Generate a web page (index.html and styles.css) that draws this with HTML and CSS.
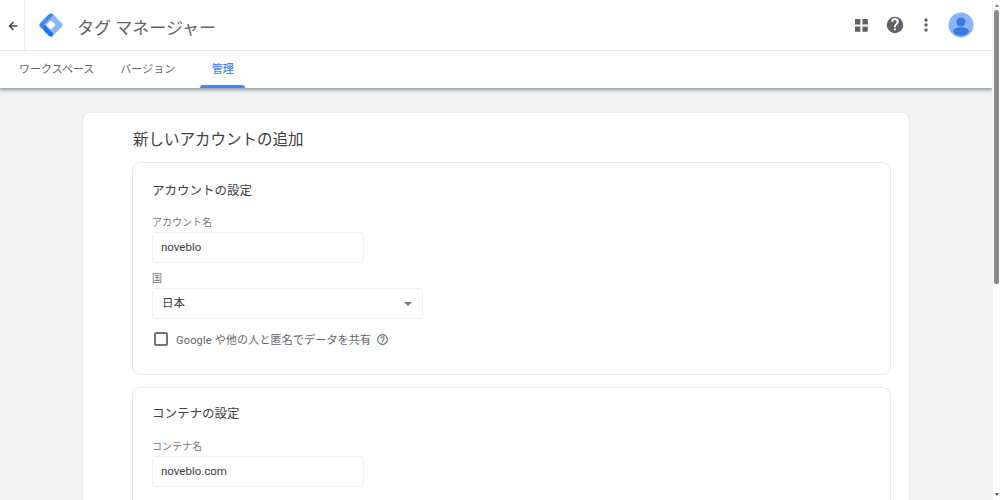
FILE: index.html
```html
<!DOCTYPE html>
<html lang="ja">
<head>
<meta charset="utf-8">
<title>タグ マネージャー</title>
<link rel="stylesheet" href="styles.css">
</head>
<body>
<div class="page">
  <header class="top">
    <div class="appbar">
      <button class="back" aria-label="戻る">
        <svg width="12" height="12" viewBox="0 0 24 24"><path d="M21 10.500H8.500l5.300-5.300L11.800 3 3 12l8.800 9 2-2.200-5.300-5.300H21z" fill="#3c4043"/></svg>
      </button>
      <svg class="logo" width="26" height="26" viewBox="0 0 26 26">
        <path d="M13 1.500c.8 0 1.500.3 2 .8l8.700 8.700c1.100 1.100 1.100 2.900 0 4L15 23.700c-1.100 1.100-2.900 1.100-4 0l-8.700-8.700c-1.100-1.100-1.100-2.900 0-4L11 2.300c.5-.5 1.200-.8 2-.8z" fill="#8ab4f8"/>
        <path d="M2.300 11 11 2.300c1.100-1.100 2.900-1.100 4 0l.5.5L6 12.500l9 9 0 2.200c-1.100 1.100-2.900 1.100-4 0l-8.700-8.700c-1.100-1.100-1.100-2.900 0-4z" fill="#4285f4"/>
        <path d="M6.500 13l3.500 3.500 5 5 0 2.200c-1.100 1-2.900 1-4 0l-5-5z" fill="#1a73e8"/>
        <path d="M13 8.300 17.700 13 13 17.700 8.300 13z" fill="#fff"/>
      </svg>
      <span class="product">タグ マネージャー</span>
      <div class="actions">
        <svg class="apps" width="13" height="13" viewBox="0 0 14 14"><path d="M0 0h5.800v5.800H0zM8 0h5.800v5.800H8zM0 8h5.800v5.800H0zM8 8h5.800v5.800H8z" fill="#5f6368"/></svg>
        <svg class="help" width="18" height="18" viewBox="0 0 24 24"><path d="M12 1a11 11 0 1 0 0 22 11 11 0 0 0 0-22zm1.200 18h-2.500v-2.500h2.500zm2.500-8.300-1.100 1.100c-.9.900-1.400 1.600-1.400 3.200h-2.500v-.6c0-1.300.5-2.400 1.400-3.300l1.500-1.600c.5-.4.700-1 .7-1.700a2.400 2.400 0 0 0-4.800 0H7a5 5 0 0 1 10 0c0 1.100-.5 2.100-1.300 2.900z" fill="#5f6368"/></svg>
        <svg class="more" width="4" height="14" viewBox="0 0 4 14"><circle cx="2" cy="2" r="1.700" fill="#5f6368"/><circle cx="2" cy="7" r="1.700" fill="#5f6368"/><circle cx="2" cy="12" r="1.700" fill="#5f6368"/></svg>
        <svg class="avatar" width="26" height="26" viewBox="0 0 26 26"><circle cx="13" cy="13" r="12.500" fill="#8ab4f8"/><circle cx="13" cy="10" r="4.500" fill="#3a78e0"/><path d="M4.800 19.500c1-3 4.700-4.300 8.200-4.300s7.200 1.300 8.200 4.300c-2 2.900-4.900 4.300-8.200 4.300s-6.200-1.400-8.200-4.300z" fill="#3a78e0"/></svg>
      </div>
    </div>
    <nav class="tabs">
      <a class="tab tab-work">ワークスペース</a>
      <a class="tab tab-ver">バージョン</a>
      <a class="tab tab-admin">管理</a>
    </nav>
  </header>

  <main class="content">
    <section class="card">
      <h1 class="title">新しいアカウントの追加</h1>
      <div class="panel panel-account">
        <h2 class="panel-title">アカウントの設定</h2>
        <label class="field-label">アカウント名</label>
        <div class="input input-short">noveblo</div>
        <label class="field-label label-country">国</label>
        <div class="input input-select">日本<span class="caret"></span></div>
        <div class="share">
          <span class="checkbox"></span>
          <span class="share-text">Google や他の人と匿名でデータを共有</span>
          <svg class="share-help" width="13" height="13" viewBox="0 0 24 24"><path d="M12 2a10 10 0 1 0 0 20 10 10 0 0 0 0-20zm0 18a8 8 0 1 1 0-16 8 8 0 0 1 0 16zm-1-3h2v-2h-2zm1-11a4 4 0 0 0-4 4h2a2 2 0 1 1 4 0c0 2-3 1.800-3 5h2c0-2.200 3-2.500 3-5a4 4 0 0 0-4-4z" fill="#5f6368"/></svg>
        </div>
      </div>
      <div class="panel panel-container">
        <h2 class="panel-title panel-title-tall">コンテナの設定</h2>
        <label class="field-label">コンテナ名</label>
        <div class="input input-short">noveblo.com</div>
      </div>
    </section>
  </main>
</div>
<div class="scrollbar">
  <span class="arrow-up"></span>
  <span class="thumb"></span>
  <span class="arrow-down"></span>
</div>
</body>
</html>
```
FILE: styles.css
```css
* { box-sizing: border-box; }
html, body { margin: 0; height: 100%; overflow: hidden; }
body {
  display: flex;
  width: 1000px;
  height: 500px;
  font-family: Roboto, "Noto Sans CJK JP", sans-serif;
  color: #3c4043;
  background: #fff;
}
.page {
  flex: 1;
  min-width: 0;
  height: 500px;
  overflow: hidden;
  background: #f1f3f4;
  display: flex;
  flex-direction: column;
}
.top {
  background: #fff;
  box-shadow: 0 1px 4px 1px rgba(60, 64, 67, .5);
  position: relative;
  z-index: 1;
  flex: none;
}
.appbar {
  height: 51px;
  display: flex;
  align-items: center;
  border-bottom: 1px solid #e8eaed;
  padding-right: 18px;
}
.back {
  width: 25px;
  height: 50px;
  border: 0;
  border-right: 1px solid #eceef0;
  background: #fff;
  padding: 2px 0 0 1px;
  display: flex;
  align-items: center;
  justify-content: center;
  flex: none;
}
.logo { margin-left: 13px; flex: none; }
.product {
  margin-left: 13px;
  padding-top: 2px;
  font-size: 17px;
  color: #5f6368;
}
.actions {
  margin-left: auto;
  display: flex;
  align-items: center;
}
.help { margin-left: 18px; }
.more { margin-left: 20px; }
.avatar { margin-left: 20px; }
.tabs {
  height: 37px;
  display: flex;
  font-size: 11px;
  color: #5f6368;
}
.tab {
  height: 37px;
  line-height: 38px;
  flex: none;
  position: relative;
}
.tab-work { margin-left: 19px; }
.tab-ver { margin-left: 26px; }
.tab-admin {
  margin-left: 25px;
  padding: 0 11.500px;
  color: #4285f4;
  font-weight: 500;
}
.tab-admin::after {
  content: "";
  position: absolute;
  left: 0;
  right: 0;
  bottom: 0;
  height: 3px;
  border-radius: 3px 3px 0 0;
  background: #4285f4;
}
.content {
  flex: 1;
  padding: 24px 82px 0 82px;
  min-height: 0;
}
.card {
  background: #fff;
  border: 1px solid #e8eaed;
  border-radius: 8px;
  padding: 15px 18px 0 49px;
  height: 500px;
}
.title {
  margin: 0 0 0 1px;
  font-size: 15.500px;
  font-weight: 400;
  line-height: 24px;
  color: #3c4043;
}
.panel {
  border: 1px solid #e6e8ea;
  border-radius: 8px;
  padding: 18px 19px 0;
  background: #fff;
}
.panel-account { margin-top: 10px; height: 213px; }
.panel-container { margin-top: 12px; height: 200px; padding-top: 16px; }
.panel-title {
  margin: 0 0 15px;
  font-size: 12.500px;
  font-weight: 400;
  line-height: 20px;
  color: #3c4043;
}
.panel-title-tall { margin-bottom: 16px; }
.field-label {
  display: block;
  font-size: 10px;
  line-height: 14px;
  color: #70757a;
}
.label-country { margin-top: 9px; }
.input {
  margin-top: 2px;
  height: 31px;
  border: 1px solid #eef0f1;
  border-radius: 3px;
  padding: 0 8px;
  font-size: 11.500px;
  line-height: 29px;
  color: #3c4043;
  position: relative;
}
.input-short { width: 212px; }
.input-select { width: 271px; padding-left: 9px; }
.caret {
  position: absolute;
  right: 10px;
  top: 13px;
  border-left: 4px solid transparent;
  border-right: 4px solid transparent;
  border-top: 4px solid #70757a;
}
.share {
  margin-top: 12px;
  display: flex;
  align-items: center;
  font-size: 11px;
  color: #5f6368;
  padding-left: 2px;
}
.checkbox {
  width: 14px;
  height: 14px;
  border: 2px solid #70757a;
  border-radius: 2px;
  flex: none;
}
.share-text { margin-left: 8px; letter-spacing: .18px; }
.share-help { margin-left: 5px; }
.scrollbar {
  flex: none;
  width: 8px;
  height: 500px;
  background: #fff;
  display: flex;
  flex-direction: column;
  align-items: center;
  border-left: 1px solid #f1f1f1;
}
.arrow-up {
  margin-top: 4px;
  border-left: 2.500px solid transparent;
  border-right: 2.500px solid transparent;
  border-bottom: 3px solid #777;
}
.thumb {
  margin-top: 3px;
  width: 5px;
  height: 274px;
  background: #8a8a8a;
  border-radius: 2px;
}
.arrow-down {
  margin-top: auto;
  margin-bottom: 4px;
  border-left: 2.500px solid transparent;
  border-right: 2.500px solid transparent;
  border-top: 3px solid #555;
}
```
